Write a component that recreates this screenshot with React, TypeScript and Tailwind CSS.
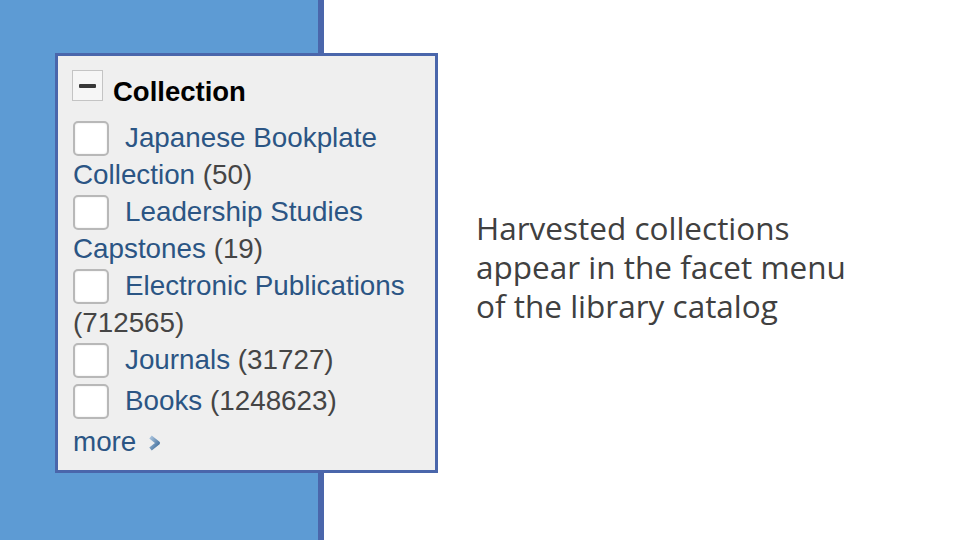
import React from 'react';

type Facet = { label: string; count: string; tall?: boolean };

const facets: Facet[] = [
  { label: 'Japanese Bookplate Collection', count: '(50)' },
  { label: 'Leadership Studies Capstones', count: '(19)' },
  { label: 'Electronic Publications', count: '(712565)' },
  { label: 'Journals', count: '(31727)', tall: true },
  { label: 'Books', count: '(1248623)', tall: true },
];

const Checkbox: React.FC = () => (
  <span className="inline-block align-top mt-[2px] mr-[16px] w-[36px] h-[35px] rounded-[5px] border-2 border-[#b8b8b8] bg-white shadow-[inset_0_0_2px_rgba(0,0,0,0.12)]" />
);

const FacetBox: React.FC = () => (
  <div
    className="relative z-10 shrink-0 w-[383px] h-[420px] border-[3px] border-[#4a66ab] bg-[#efefef] pl-[15px] pr-[4px] text-[27.8px] leading-[37px]"
    style={{ fontFamily: '"Liberation Sans", Arial, sans-serif' }}
  >
    <div className="pt-[14px] mb-[9px] -ml-px font-bold text-black text-[27.5px]">
      <span className="inline-block w-[31px] h-[31px] mr-[10px] border border-[#c4c4c4] bg-[#f6f6f6]">
        <span className="block w-[17px] h-[4px] mt-[13px] ml-[6px] rounded-[1px] bg-[#383838]" />
      </span>
      Collection
    </div>
    {facets.map((f) => (
      <div key={f.label} className={f.tall ? 'h-[41px]' : ''}>
        <Checkbox />
        <span className="text-[#2b5584]">{f.label}</span>{' '}
        <span className="text-[#454545]">{f.count}</span>
      </div>
    ))}
    <div className="text-[#2b5584]">
      more
      <svg className="inline-block ml-[12px] align-baseline" width="13" height="16" viewBox="0 0 13 16">
        <defs>
          <linearGradient id="chev" x1="0" y1="0" x2="1" y2="1">
            <stop offset="0" stopColor="#a9c3dd" />
            <stop offset="1" stopColor="#3f6d9b" />
          </linearGradient>
        </defs>
        <path d="M2.5 2 L10 8 L2.5 14" fill="none" stroke="url(#chev)" strokeWidth="4" strokeLinejoin="round" />
      </svg>
    </div>
  </div>
);

export default function App() {
  return (
    <div className="flex w-[960px] h-[540px] overflow-hidden bg-white">
      <div className="shrink-0 w-[324px] h-full bg-[#5d9bd4] border-r-[6px] border-[#4a66ab] pl-[55px] pt-[53px]">
        <FacetBox />
      </div>
      <div
        className="pl-[152px] pt-[208px] text-[31.5px] leading-[39px] text-[#404040]"
        style={{ fontFamily: '"Open Sans", sans-serif' }}
      >
        Harvested collections
        <br />
        appear in the facet menu
        <br />
        of the library catalog
      </div>
    </div>
  );
}
